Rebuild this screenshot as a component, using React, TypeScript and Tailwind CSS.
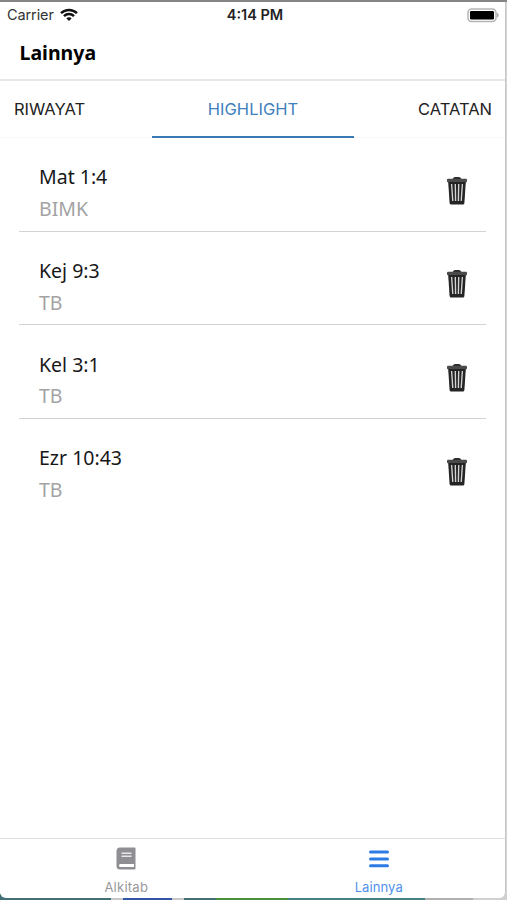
import React from "react";

const highlights = [
  { verse: "Mat 1:4", version: "BIMK" },
  { verse: "Kej 9:3", version: "TB" },
  { verse: "Kel 3:1", version: "TB" },
  { verse: "Ezr 10:43", version: "TB" },
];

function WifiIcon() {
  return (
    <svg width="18" height="14" viewBox="0 0 18 14" fill="none" stroke="#111" strokeWidth="2.5">
      <path d="M1 5.2C5.5 .8 12.500 .8 17 5.200" />
      <path d="M4 8.200C6.800 5.400 11.200 5.400 14 8.200" />
      <path d="M6.300 10.200C7.800 8.800 10.200 8.800 11.700 10.200L9 13Z" fill="#111" stroke="none" />
    </svg>
  );
}

function BatteryIcon() {
  return (
    <svg width="33" height="15" viewBox="0 0 33 15">
      <rect x="1" y="1" width="28" height="12.500" rx="3.500" fill="#fff" stroke="#b5b5b5" strokeWidth="1.500" />
      <rect x="3" y="3" width="24" height="8.600" rx="1.300" fill="#000" />
      <path d="M30.500 5.200Q32.200 7.200 30.500 9.200Z" fill="#999" stroke="#999" strokeWidth=".6" />
    </svg>
  );
}

function TrashIcon() {
  return (
    <svg width="22" height="30" viewBox="0 0 22 30">
      <path d="M6.500 3.500Q7 1 9 1H13Q15 1 15.500 3.500Z" fill="#2b2b2b" />
      <rect x="1" y="2.800" width="20" height="3.400" rx="1" fill="#4a4a4a" />
      <path d="M2.200 6H19.800L18.400 27Q18.200 28.500 17 28.500H5Q3.800 28.500 3.600 27Z" fill="#242424" />
      <path d="M5.600 8L6.800 25M9.300 8L9.600 25M12.700 8L12.400 25M16.400 8L15.200 25" stroke="#d4d4d4" strokeWidth="1.350" />
    </svg>
  );
}

function BookIcon() {
  return (
    <svg width="20" height="23" viewBox="0 0 20 23">
      <path d="M4 .5H18.700Q19.500 .5 19.500 1.300V21.500Q19.500 22.500 18.500 22.500H4Q.5 22.500 .5 19V4Q.5 .5 4 .5Z" fill="#8e8e93" />
      <path d="M4.500 17H18V20H4.500Q3 20 3 18.500Q3 17 4.500 17Z" fill="#fff" />
      <path d="M5.500 6.300H15.500M5.500 9.300H15.500" stroke="#e8e8ea" strokeWidth="1.500" />
    </svg>
  );
}

function MenuIcon() {
  return (
    <svg width="20" height="18" viewBox="0 0 20 18" stroke="#2f7be5" strokeWidth="3" strokeLinecap="round">
      <path d="M1.500 2H18.500M1.500 9H18.500M1.500 15.800H18.500" />
    </svg>
  );
}

export default function App() {
  return (
    <div className="relative flex h-[900px] w-[507px] flex-col overflow-hidden bg-[#d5d5d5] font-['Noto_Sans',sans-serif]">
      <div className="h-[2px] shrink-0 bg-[#858585]" />
      <div className="relative z-10 flex h-[896px] w-[506px] shrink-0 flex-col overflow-hidden rounded-b-[6px] border-r border-[#c8c8c8] bg-white">
        <header className="flex h-[79px] shrink-0 flex-col border-b-2 border-[#e8e8e8]">
          <div className="grid h-[26px] grid-cols-3 items-center pl-[7px] pr-[5px] font-['Inter',sans-serif] text-[14.500px] text-[#333]">
            <div className="flex items-center gap-[6px] tracking-[-0.1px]">
              <span>Carrier</span>
              <WifiIcon />
            </div>
            <span className="pl-[3px] text-center font-semibold text-[#222]">4:14 PM</span>
            <div className="flex justify-end"><BatteryIcon /></div>
          </div>
          <h1 className="pl-[19.500px] pt-[10px] text-[19.500px] font-bold leading-[29px] text-black">Lainnya</h1>
        </header>
        <nav className="flex h-[57px] shrink-0 font-['Inter',sans-serif] text-[16.500px] text-[#222]">
          <div className="flex w-[152px] items-center border-b border-[#f8f8f8] pl-[14px]">RIWAYAT</div>
          <div className="flex w-[202px] items-center justify-center border-b-2 border-[#397ab5] pt-[1px] text-[#417fbd]">HIGHLIGHT</div>
          <div className="flex flex-1 items-center justify-end border-b border-[#f8f8f8] pr-[13px]">CATATAN</div>
        </nav>
        <main className="flex-1 pl-[19px] pr-[19px]">
          {highlights.map((item) => (
            <div key={item.verse} className="flex h-[93.700px] items-center justify-between border-b border-[#d3d3d3] pl-5 pr-[18px] last:border-transparent">
              <div className="pt-[17px] text-[19.500px] leading-[31.700px]">
                <div className="text-[#171717]">{item.verse}</div>
                <div className="text-[#a3a3a3]">{item.version}</div>
              </div>
              <div className="pt-[12.500px] pr-[0.500px]"><TrashIcon /></div>
            </div>
          ))}
        </main>
        <footer className="grid h-[60px] shrink-0 grid-cols-2 border-t-[1.500px] border-[#e2e2e2] font-['Inter',sans-serif] text-[13px] leading-[16px]">
          <div className="flex flex-col items-center pt-[8px] text-[#98989c]">
            <div className="flex h-[23px] items-center"><BookIcon /></div>
            <span className="mt-[9px] tracking-[0.25px]">Alkitab</span>
          </div>
          <div className="flex flex-col items-center pt-[8px] text-[#5091ea]">
            <div className="flex h-[23px] items-center"><MenuIcon /></div>
            <span className="mt-[9px] tracking-[0.1px]">Lainnya</span>
          </div>
        </footer>
      </div>
      <div className="-mt-[4px] flex h-[6px] shrink-0">
        <div className="w-[111px] bg-[#417177]" />
        <div className="w-[12px] bg-[#c9c9c9]" />
        <div className="w-[49px] bg-[#3156a5]" />
        <div className="w-[12px] bg-[#c9c9c9]" />
        <div className="w-[32px] bg-[#417177]" />
        <div className="w-[72px] bg-[#4b9038]" />
        <div className="w-[137px] bg-[#458087]" />
        <div className="w-[48px] bg-[#b0b0b0]" />
        <div className="flex-1 bg-[#d0d0d0]" />
      </div>
    </div>
  );
}
